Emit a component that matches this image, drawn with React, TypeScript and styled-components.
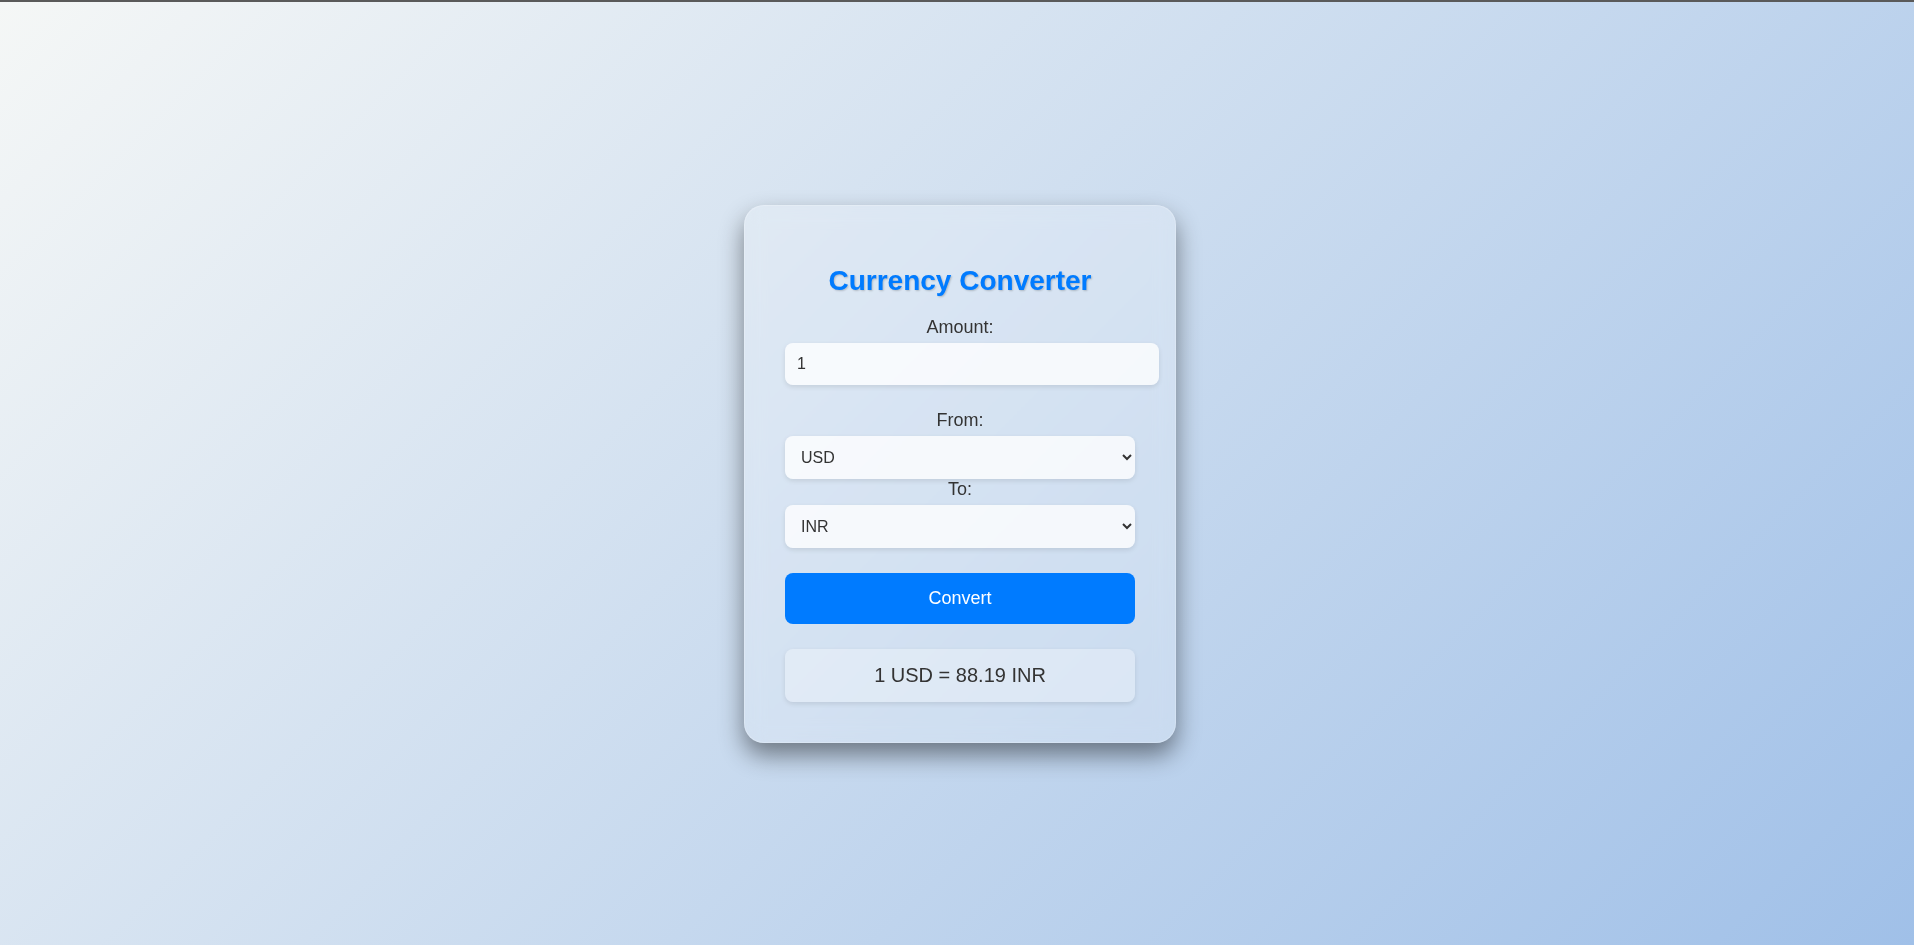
import React, { useState } from "react";
import styled, { createGlobalStyle } from "styled-components";

const GlobalStyle = createGlobalStyle`
  * { box-sizing: border-box; }
  html, body { margin: 0; padding: 0; }
  body {
    font-family: "Liberation Sans", Arial, sans-serif;
    background: linear-gradient(135deg, #f5f7f6 0%, #a0c0e8 100%);
    min-height: 100vh;
  }
`;

const Page = styled.div`
  min-height: 100vh;
  border-top: 2px solid #5a5a5a;
  display: flex;
  align-items: center;
  justify-content: center;
  padding-left: 6px;
`;

const Card = styled.div`
  box-sizing: content-box;
  width: 350px;
  padding: 40px;
  border: 1px solid rgba(255, 255, 255, 0.2);
  border-radius: 20px;
  background: rgba(255, 255, 255, 0.2);
  backdrop-filter: blur(10px);
  box-shadow: 0 12px 24px rgba(0, 0, 0, 0.45);
  text-align: center;
`;

const Title = styled.h2`
  margin: 19px 0 20px;
  font-size: 28px;
  line-height: 32px;
  font-weight: bold;
  color: #007bff;
  text-shadow: 1px 1px 2px rgba(0, 0, 0, 0.2);
`;

const Label = styled.label`
  display: block;
  font-size: 18px;
  line-height: 21px;
  color: #333;
  margin-bottom: 5px;
`;

const Field = styled.div<{ $gap: number }>`
  margin-bottom: ${(p) => p.$gap}px;
`;

const AmountInput = styled.input`
  box-sizing: content-box;
  display: block;
  width: 100%;
  height: 42px;
  padding: 0 12px;
  border: none;
  border-radius: 8px;
  background: rgba(255, 255, 255, 0.78);
  box-shadow: 0 2px 5px rgba(0, 0, 0, 0.1);
  font-family: "Liberation Sans", Arial, sans-serif;
  font-size: 16px;
  color: #333;
  outline: none;
`;

const Select = styled.select`
  display: block;
  width: 100%;
  height: 43px;
  padding: 0 8px 0 12px;
  border: none;
  border-radius: 8px;
  background: rgba(255, 255, 255, 0.78);
  box-shadow: 0 2px 5px rgba(0, 0, 0, 0.1);
  font-family: "Liberation Sans", Arial, sans-serif;
  font-size: 16px;
  color: #333;
  outline: none;
`;

const Button = styled.button`
  display: block;
  width: 100%;
  height: 51px;
  border: none;
  border-radius: 8px;
  background: #007bff;
  color: #fff;
  font-family: "Liberation Sans", Arial, sans-serif;
  font-size: 18px;
  cursor: pointer;
  margin-bottom: 25px;
`;

const Result = styled.div`
  height: 53px;
  display: flex;
  align-items: center;
  justify-content: center;
  border-radius: 8px;
  background: rgba(255, 255, 255, 0.3);
  box-shadow: 0 2px 5px rgba(0, 0, 0, 0.1);
  font-size: 20px;
  color: #333;
`;

const currencies = ["USD", "EUR", "GBP", "INR", "JPY", "AUD", "CAD"];

export default function App() {
  const [amount, setAmount] = useState("1");
  const [from, setFrom] = useState("USD");
  const [to, setTo] = useState("INR");
  return (
    <>
      <GlobalStyle />
      <Page>
        <Card>
          <Title>Currency Converter</Title>
          <Field $gap={25}>
            <Label>Amount:</Label>
            <AmountInput value={amount} onChange={(e) => setAmount(e.target.value)} />
          </Field>
          <Field $gap={0}>
            <Label>From:</Label>
            <Select value={from} onChange={(e) => setFrom(e.target.value)}>
              {currencies.map((c) => (
                <option key={c}>{c}</option>
              ))}
            </Select>
          </Field>
          <Field $gap={25}>
            <Label>To:</Label>
            <Select value={to} onChange={(e) => setTo(e.target.value)}>
              {currencies.map((c) => (
                <option key={c}>{c}</option>
              ))}
            </Select>
          </Field>
          <Button>Convert</Button>
          <Result>1 USD = 88.19 INR</Result>
        </Card>
      </Page>
    </>
  );
}
